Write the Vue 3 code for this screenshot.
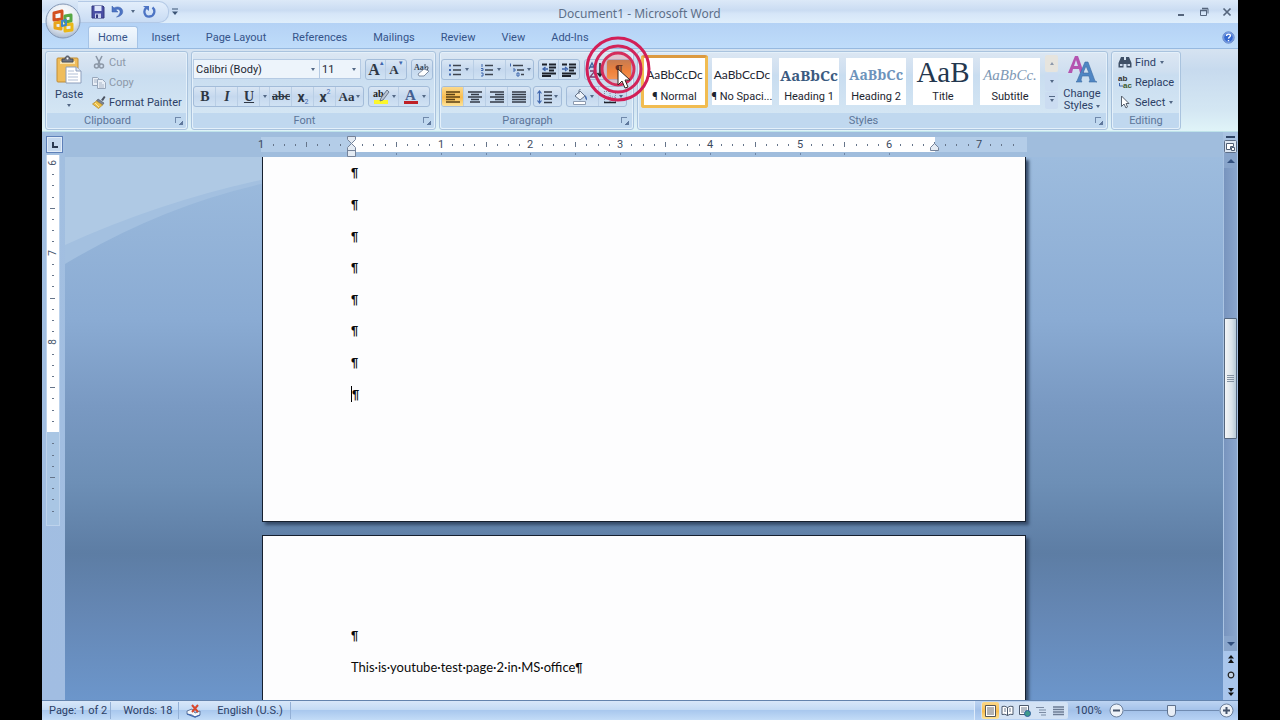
<script setup>
import { ref } from 'vue'

const tabs = ['Home', 'Insert', 'Page Layout', 'References', 'Mailings', 'Review', 'View', 'Add-Ins']
const activeTab = ref('Home')

const styleCards = [
  { name: '¶ Normal', sample: 'AaBbCcDc', kind: 'plain' },
  { name: '¶ No Spaci...', sample: 'AaBbCcDc', kind: 'plain' },
  { name: 'Heading 1', sample: 'AaBbCc', kind: 'h1' },
  { name: 'Heading 2', sample: 'AaBbCc', kind: 'h2' },
  { name: 'Title', sample: 'AaB', kind: 'title' },
  { name: 'Subtitle', sample: 'AaBbCc.', kind: 'subtitle' },
]
const activeStyle = ref(0)

const emptyLines = [1, 2, 3, 4, 5, 6, 7, 8]

const INCH = 89.7
const ORIGIN = 90
const ticks = []
for (let i = -7; i <= 59; i++) {
  if (i % 8 === 0) continue
  ticks.push({ x: Math.round(ORIGIN + (i * INCH) / 8), half: Math.abs(i % 8) === 4 })
}
const inches = [-1, 1, 2, 3, 4, 5, 6, 7].map((n) => ({
  label: Math.abs(n),
  x: Math.round(ORIGIN + n * INCH),
}))
const tabStops = []
for (let i = 1; i <= 12; i++) tabStops.push(Math.round(ORIGIN + (i * INCH) / 2))

const vTicks = []
for (let i = 1; i <= 31; i++) {
  if (i % 8 === 0 || i === 24) continue
  vTicks.push({ y: Math.round(8 + (i * INCH) / 8), half: i % 8 === 4 })
}
const vNumbers = [6, 7, 8].map((n, i) => ({ n, y: Math.round(8 + i * INCH) }))

const scroll = { top: 32, size: 26 }
const zoom = ref(50)
const fontName = ref('Calibri (Body)')
const fontSize = ref('11')
</script>

<template>
  <div class="stage">
    <div class="word">
      <button class="office" aria-label="Office Button">
        <svg width="36" height="36" viewBox="0 0 36 36">
          <defs>
            <radialGradient id="orb" cx="50%" cy="30%" r="75%">
              <stop offset="0" stop-color="#fff" />
              <stop offset=".6" stop-color="#e4eaf2" />
              <stop offset="1" stop-color="#9fb0c8" />
            </radialGradient>
          </defs>
          <circle cx="18" cy="18" r="17" fill="url(#orb)" stroke="#8296b4" />
          <g fill="none" stroke-width="3" stroke-linejoin="round">
            <path d="M9 10l8-2v8l-8 1z" stroke="#d3501f" />
            <path d="M20 13l6-1v6l-6 1z" stroke="#57a845" />
            <path d="M10 20l6-1v7l-6-1z" stroke="#e8a41b" />
            <path d="M20 22l7-1v6l-7 1z" stroke="#eab818" />
            <path d="M17 18l4-1v5l-4 1z" stroke="#3f86c9" stroke-width="2" />
          </g>
        </svg>
      </button>

      <header class="titlebar">
        <div class="quick">
          <button aria-label="Save">
            <svg width="14" height="14" viewBox="0 0 14 14"><path d="M1 1h11l1 1v11H1z" fill="#4a4fa5" stroke="#35397f" /><path d="M3.500 1h7v5h-7z" fill="#dfe6fa" /><path d="M4 8.500h6V13H4z" fill="#c9d1ee" /><path d="M5 9.500h2V13H5z" fill="#35397f" /></svg>
          </button>
          <button class="undo" aria-label="Undo">
            <svg width="13" height="13" viewBox="0 0 13 13"><path d="M1 1v6h6L4.700 4.800C7 3.300 9.500 4.500 9 7.500 8.700 9.500 7 11 5.500 12 10 11.500 12.500 8.500 11.500 5.200 10.500 2 6 1 3 3z" fill="#4d74c4" stroke="#3a5ca9" stroke-width=".5" /></svg>
          </button>
          <i class="caret"></i>
          <button class="redo" aria-label="Repeat">
            <svg width="13" height="13" viewBox="0 0 13 13"><path d="M9.500 2.500C12.500 5 12 11 6.500 11.500S0 5 3.500 2.800" fill="none" stroke="#4d74c4" stroke-width="2.300" /><path d="M0 1h6v5z" fill="#4d74c4" /></svg>
          </button>
        </div>
        <button class="customize" aria-label="Customize Quick Access Toolbar">
          <svg width="8" height="8" viewBox="0 0 8 8"><path d="M1 1h6" stroke="#3b5475" /><path d="M1 3.500h6L4 7z" fill="#3b5475" /></svg>
        </button>
        <h1>Document1 - Microsoft Word</h1>
        <div class="window-buttons">
          <button aria-label="Minimize"><svg width="10" height="10" viewBox="0 0 10 10"><path d="M2 8h6" stroke="#55657c" stroke-width="2" /></svg></button>
          <button aria-label="Restore"><svg width="10" height="10" viewBox="0 0 10 10"><path d="M1.500 3.500h6v5h-6zM3 1.500h6v5" fill="none" stroke="#55657c" /><path d="M1 3.500h7M3 1.500h6" stroke="#55657c" stroke-width="1.500" /></svg></button>
          <button aria-label="Close"><svg width="10" height="10" viewBox="0 0 10 10"><path d="M1.500 1.500l7 7M8.500 1.500l-7 7" stroke="#55657c" stroke-width="1.700" /></svg></button>
        </div>
      </header>

      <nav class="tabs">
        <button v-for="t in tabs" :key="t" :class="{ active: t === activeTab }" @click="activeTab = t">{{ t }}</button>
        <button class="help" aria-label="Help">
          <svg width="13" height="13" viewBox="0 0 13 13"><circle cx="6.500" cy="6.500" r="5.700" fill="#3568cf" stroke="#6f8fca" /><circle cx="6.500" cy="6.500" r="4.800" fill="none" stroke="#bcd3f8" stroke-width=".6" /><path d="M4.500 5c0-2.600 4.200-2.300 4-.2C8.400 6 6.600 6 6.500 7.600M6.500 9v1.300" fill="none" stroke="#fff" stroke-width="1.400" /></svg>
        </button>
      </nav>

      <section class="ribbon">
        <div class="group clipboard">
          <div class="body">
            <button class="paste">
              <svg width="28" height="30" viewBox="0 0 28 30"><rect x="2" y="3" width="21" height="24" rx="1" fill="#f0bd5b" stroke="#c28d35" /><path d="M5 6h15v3H5z" fill="#f8e3ae" /><path d="M7 7V4h3c0-4 5-4 5 0h3v3z" fill="#6f7480" stroke="#474c58" /><circle cx="12.500" cy="3.500" r="1" fill="#fff" /><path d="M11 12h10l5 4v12H11z" fill="#fff" stroke="#8d9ebb" /><path d="M21 12v4h5" fill="#dde6f3" stroke="#8d9ebb" /><path d="M13 16h6M13 19h10M13 22h10M13 25h10" stroke="#b1bfd6" /></svg>
              <span>Paste</span>
              <i class="caret"></i>
            </button>
            <div class="stack">
              <button class="off">
                <svg width="14" height="14" viewBox="0 0 14 14"><path d="M4 1l4 8M10 1L6 9" stroke="#8c97a6" stroke-width="1.600" /><circle cx="4.500" cy="11" r="2" fill="none" stroke="#8c97a6" stroke-width="1.500" /><circle cx="9.500" cy="11" r="2" fill="none" stroke="#8c97a6" stroke-width="1.500" /></svg>
                Cut
              </button>
              <button class="off">
                <svg width="14" height="14" viewBox="0 0 14 14"><path d="M.5 2.500h5l2 2v6h-7z" fill="#e8eef6" stroke="#98a7bb" /><path d="M5.500 4.500h5l3 3v6h-8z" fill="#e8eef6" stroke="#98a7bb" /><path d="M7 8h3M7 10h5M7 12h5M2 5h3M2 7h3" stroke="#a9b6c8" /></svg>
                Copy
              </button>
              <button>
                <svg width="14" height="14" viewBox="0 0 14 14"><path d="M9 5l3-4 1.500 1L11 6z" fill="#4b5260" /><path d="M6 4l6 4-1.500 2-6-4z" fill="#7c8494" stroke="#4b5260" stroke-width=".6" /><path d="M4.500 6l6 4-4 3.500L.5 9z" fill="#ecc04a" stroke="#b28723" stroke-width=".7" /><path d="M3 8l4 4" stroke="#fbe7a4" /></svg>
                Format Painter
              </button>
            </div>
          </div>
          <footer class="with-launcher">Clipboard<i class="launcher"></i></footer>
        </div>

        <div class="group font">
          <div class="body rows">
            <div class="row">
              <div class="combos">
                <label class="combo name"><select v-model="fontName" aria-label="Font"><option>Calibri (Body)</option></select><i class="caret"></i></label>
                <label class="combo size"><select v-model="fontSize" aria-label="Font Size"><option>11</option></select><i class="caret"></i></label>
              </div>
              <div class="set">
                <button class="w20 serif s16" aria-label="Grow Font">A<sup>▴</sup></button>
                <button class="w20 serif s13" aria-label="Shrink Font">A<sup>▾</sup></button>
              </div>
              <div class="set">
                <button class="w20" aria-label="Clear Formatting">
                  <svg width="18" height="16" viewBox="0 0 18 16"><text x="1" y="8" font-size="8" font-family="Liberation Serif" font-weight="700" fill="#333f50">Aa</text><path d="M12 2v6M12 6q3-3 3 0t-3 2" fill="none" stroke="#333f50" stroke-width=".9" /><path d="M5 12l6-5 5 2-5 5-5 0z" fill="#fff" stroke="#7f8da2" /></svg>
                </button>
              </div>
            </div>
            <div class="row">
              <div class="set">
                <button class="w22 serif s14 bold">B</button>
                <button class="w22 serif s14 bold italic">I</button>
                <button class="w22 serif s14 bold under">U</button>
                <button class="w10" aria-label="Underline styles"><i class="caret"></i></button>
                <button class="w22 serif s12 bold strike">abc</button>
                <button class="w22 s14 bold" aria-label="Subscript">x<sub>2</sub></button>
                <button class="w22 s14 bold" aria-label="Superscript">x<sup class="two">2</sup></button>
                <button class="w28 serif s13 bold">Aa<i class="caret"></i></button>
              </div>
              <div class="set">
                <button class="w30" aria-label="Text Highlight Color">
                  <svg width="18" height="18" viewBox="0 0 18 18"><path d="M2 12h14v4H2z" fill="#fbf62c" /><text x="1" y="9" font-size="10" font-family="Liberation Serif" font-weight="700" fill="#222">ab</text><path d="M15 2l2 2-6 8-3 1 1-3z" fill="#b9c4d4" stroke="#56647a" stroke-width=".8" /></svg>
                  <i class="caret"></i>
                </button>
                <button class="w30" aria-label="Font Color">
                  <svg width="18" height="18" viewBox="0 0 18 18"><path d="M2 13h14v3H2z" fill="#bf2026" /><text x="3" y="12" font-size="15" font-family="Liberation Serif" font-weight="700" fill="#456091">A</text></svg>
                  <i class="caret"></i>
                </button>
              </div>
            </div>
          </div>
          <footer class="with-launcher">Font<i class="launcher"></i></footer>
        </div>

        <div class="group paragraph">
          <div class="body rows">
            <div class="row">
              <div class="set">
                <button class="w32" aria-label="Bullets">
                  <svg width="16" height="16" viewBox="0 0 16 16"><path d="M2 3.500h2M2 8h2M2 12.500h2" stroke="#3f66ad" stroke-width="2" /><path d="M6 3.500h8M6 8h8M6 12.500h8" stroke="#3d444f" stroke-width="1.500" /></svg><i class="caret"></i>
                </button>
                <button class="w32" aria-label="Numbering">
                  <svg width="16" height="16" viewBox="0 0 16 16"><path d="M3 2v3M2 6.500h2v2H2M2 11h2v3H2" stroke="#3f66ad" fill="none" /><path d="M6 3.500h8M6 8h8M6 12.500h8" stroke="#3d444f" stroke-width="1.500" /></svg><i class="caret"></i>
                </button>
                <button class="w28" aria-label="Multilevel List">
                  <svg width="16" height="16" viewBox="0 0 16 16"><path d="M1.500 1.500v3M4 7h2v2H4M8 11h2v3H8z" stroke="#3f66ad" fill="none" /><path d="M4 3.500h10M8 8h7M12 12.500h3" stroke="#3d444f" stroke-width="1.500" /></svg><i class="caret"></i>
                </button>
              </div>
              <div class="set">
                <button class="w20" aria-label="Decrease Indent">
                  <svg width="16" height="16" viewBox="0 0 16 16"><path d="M1 2.500h5M8 2.500h7M8 5.500h7M8 8.500h5M1 11.500h14M1 14h9" stroke="#1d222b" stroke-width="1.800" /><path d="M7 7H3M4.500 5L2 7l2.500 2" fill="none" stroke="#3f66ad" stroke-width="1.300" /></svg>
                </button>
                <button class="w20" aria-label="Increase Indent">
                  <svg width="16" height="16" viewBox="0 0 16 16"><path d="M1 2.500h5M8 2.500h7M8 5.500h7M8 8.500h5M1 11.500h14M1 14h9" stroke="#1d222b" stroke-width="1.800" /><path d="M1 7h4M4 5l2.500 2L4 9" fill="none" stroke="#3f66ad" stroke-width="1.300" /></svg>
                </button>
              </div>
              <div class="set">
                <button class="w22" aria-label="Sort">
                  <svg width="16" height="18" viewBox="0 0 16 18"><path d="M1 8l3-6 3 6M2 6h4" fill="none" stroke="#3f5f9c" stroke-width="1.300" /><path d="M2 10h5l-5 6h5" fill="none" stroke="#7d3b6d" stroke-width="1.300" /><path d="M12 2v12M9.500 12l2.500 3 2.500-3" fill="none" stroke="#20252e" stroke-width="1.600" /></svg>
                </button>
                <button class="pilcrow" aria-label="Show/Hide paragraph marks">¶
                  <svg class="click" width="66" height="66" viewBox="0 0 66 66">
                    <circle cx="33" cy="33" r="16" fill="#f06a6a" fill-opacity=".25" stroke="#d52d5c" stroke-width="3" />
                    <circle cx="33" cy="33" r="23" fill="none" stroke="#d2245a" stroke-width="3" />
                    <circle cx="33" cy="33" r="31" fill="none" stroke="#d21f57" stroke-width="3" />
                    <path d="M33 33v16l4-4 3 7 3-1-3-7h5z" fill="#fff" stroke="#33261f" />
                  </svg>
                </button>
              </div>
            </div>
            <div class="row tight">
              <div class="set">
                <button class="w22 chosen" aria-label="Align Left"><svg width="14" height="14" viewBox="0 0 14 14"><path d="M0 2h14M0 4.500h9M0 7h14M0 9.500h9M0 12h14" stroke="#5b4214" stroke-width="1.400" /></svg></button>
                <button class="w22" aria-label="Center"><svg width="14" height="14" viewBox="0 0 14 14"><path d="M0 2h14M3 4.500h8M0 7h14M3 9.500h8M2 12h10" stroke="#333a46" stroke-width="1.400" /></svg></button>
                <button class="w22" aria-label="Align Right"><svg width="14" height="14" viewBox="0 0 14 14"><path d="M0 2h14M5 4.500h9M0 7h14M5 9.500h9M0 12h14" stroke="#333a46" stroke-width="1.400" /></svg></button>
                <button class="w22" aria-label="Justify"><svg width="14" height="14" viewBox="0 0 14 14"><path d="M0 2h14M0 4.500h14M0 7h14M0 9.500h14M0 12h14" stroke="#333a46" stroke-width="1.400" /></svg></button>
              </div>
              <div class="set">
                <button class="w28" aria-label="Line Spacing"><svg width="15" height="16" viewBox="0 0 15 16"><path d="M2.500 2v12M.5 4.500l2-2.500 2 2.500M.5 11.500l2 2.500 2-2.500" fill="none" stroke="#3f66ad" stroke-width="1.200" /><path d="M7 3h8M7 6.500h8M7 10h8M7 13.500h8" stroke="#333a46" stroke-width="1.300" /></svg><i class="caret"></i></button>
              </div>
              <div class="set">
                <button class="w32" aria-label="Shading"><svg width="16" height="16" viewBox="0 0 16 16"><path d="M3 7l5-5 5 5-5 4z" fill="#eef3fa" stroke="#66748a" /><path d="M7 5V1.500q0-1 1.500-1" fill="none" stroke="#66748a" /><path d="M13 6q3 3 1.500 5.500Q12.500 9 13 6z" fill="#3f66ad" /><path d="M1.500 12.500h12v3h-12z" fill="#fff" stroke="#8d9bb0" /></svg><i class="caret"></i></button>
                <button class="w28" aria-label="Borders"><svg width="14" height="14" viewBox="0 0 14 14"><path d="M1.500 1v11M12.500 1v11M7 1v11M1 1.500h12M1 7h12" stroke="#7f8ca1" stroke-dasharray="1 1" /><path d="M1 12.500h12" stroke="#1d222b" stroke-width="1.500" /></svg><i class="caret"></i></button>
              </div>
            </div>
          </div>
          <footer class="with-launcher">Paragraph<i class="launcher"></i></footer>
        </div>

        <div class="group styles">
          <div class="body">
            <div class="gallery">
              <button v-for="(s, i) in styleCards" :key="s.name" class="card" :class="[s.kind, { picked: i === activeStyle }]" @click="activeStyle = i">
                <span class="sample">{{ s.sample }}</span>
                <span class="label">{{ s.name }}</span>
              </button>
              <div class="gallery-nav">
                <button class="dim" aria-label="Previous styles"><i class="caret up"></i></button>
                <button aria-label="Next styles"><i class="caret"></i></button>
                <button aria-label="More styles"><i class="caret bar"></i></button>
              </div>
            </div>
            <button class="change">
              <svg width="30" height="30" viewBox="0 0 30 30"><path d="M1 18L8 1h3l6 17h-4l-1-4H6l-1 4zM7 11h4L9 5z" fill="#b455b0" fill-rule="evenodd" /><path d="M9 27l1-1L18 7h3l7 19 2 1h-8l1-2-1-4h-7l-1 4 1 2zM16 18h6l-3-7z" fill="#4f86c4" stroke="#3c6ba3" stroke-width=".6" fill-rule="evenodd" /></svg>
              <span>Change</span>
              <span>Styles <i class="caret"></i></span>
            </button>
          </div>
          <footer class="with-launcher">Styles<i class="launcher"></i></footer>
        </div>

        <div class="group editing">
          <div class="body">
            <div class="stack">
              <button>
                <svg width="14" height="14" viewBox="0 0 14 14"><path d="M3 2h3v3h2V2h3l2.500 6v4.500h-5V9h-3v3.500h-5V8z" fill="#3e4f66" /><path d="M2 9h2.500v2H2zM9.500 9H12v2H9.500z" fill="#c8d6e8" /></svg>
                Find <i class="caret"></i>
              </button>
              <button>
                <svg width="14" height="14" viewBox="0 0 14 14"><text x="0" y="6" font-size="8" font-family="Liberation Sans" font-weight="700" fill="#333">ab</text><text x="5" y="13" font-size="8" font-family="Liberation Sans" font-weight="700" fill="#3c5a2c">ac</text><path d="M1.500 8v3H5" fill="none" stroke="#3f66ad" /></svg>
                Replace
              </button>
              <button>
                <svg width="14" height="14" viewBox="0 0 14 14"><path d="M3.500 1v10.500L6 9l2 4 1.500-1-1.500-3.500h3z" fill="#fff" stroke="#56606e" /></svg>
                Select <i class="caret"></i>
              </button>
            </div>
          </div>
          <footer>Editing</footer>
        </div>
      </section>

      <main class="work">
        <aside class="left-ruler">
          <button class="tab-kind" aria-label="Tab selector"><svg width="12" height="12" viewBox="0 0 12 12"><path d="M4 3v5h5" fill="none" stroke="#2c3a52" stroke-width="2" /></svg></button>
          <svg class="vruler" width="14" height="371" viewBox="0 0 14 371">
            <rect width="14" height="371" fill="#bdd3ec" />
            <rect x="1" width="12" height="277" fill="#fff" />
            <rect x="1" y="277" width="12" height="93" fill="#a9c6e4" />
            <path v-for="t in vTicks" :key="t.y" :d="`M${t.half ? 4 : 6} ${t.y}.5h${t.half ? 5 : 2}`" stroke="#66758a" />
            <text v-for="v in vNumbers" :key="v.n" x="0" y="0" :transform="`translate(10 ${v.y}) rotate(-90)`" text-anchor="middle" font-size="10" fill="#44546a">{{ v.n }}</text>
          </svg>
        </aside>

        <div class="center">
          <div class="hruler">
            <svg width="766" height="25" viewBox="0 0 766 25">
              <rect y="5" width="766" height="15" fill="#b4cde8" />
              <rect x="90" y="5" width="584" height="15" fill="#fff" />
              <path v-for="t in ticks" :key="t.x" :d="`M${t.x}.5 ${t.half ? 10 : 12}v${t.half ? 5 : 2}`" stroke="#66758a" />
              <path v-for="x in tabStops" :key="'s' + x" :d="`M${x}.5 21v2`" stroke="#6f87a8" />
              <text v-for="n in inches" :key="n.x" :x="n.x" y="16" text-anchor="middle" font-size="11" fill="#3c4a5e">{{ n.label }}</text>
              <path d="M86.500 4.500h8v3l-4 4 4 4v9h-8v-9l4-4-4-4zM86.500 18.500h8" fill="#e4ebf3" stroke="#75839a" />
              <path d="M669.500 18.500v-3l4-4 4 4v3z" fill="#e4ebf3" stroke="#75839a" />
            </svg>
          </div>
          <div class="canvas">
            <svg class="swoosh" width="420" height="110" viewBox="0 0 420 110">
              <path d="M0 107Q95 50 196 27T420 0H0z" fill="#a3c0e0" />
              <path d="M0 88Q95 45 196 23T420 0H0z" fill="#afc9e4" />
            </svg>
            <article class="page first">
              <p v-for="n in emptyLines" :key="n"><i v-if="n === emptyLines.length" class="insertion"></i><b>¶</b></p>
            </article>
            <article class="page second">
              <p><b>¶</b></p>
              <p>This·is·youtube·test·page·2·in·MS·office<b>¶</b></p>
            </article>
          </div>
        </div>

        <aside class="scroller">
          <div class="split"></div>
          <button class="ruler-toggle" aria-label="View Ruler"><svg width="13" height="13" viewBox="0 0 13 13"><rect x=".5" y=".5" width="12" height="12" rx="1" fill="#dce6f2" stroke="#5c6d86" /><path d="M2.500 3.500h7v3h-3v3h-4z" fill="#fff" stroke="#4f5e74" /><path d="M7.500 7.500h3v3h-3z" fill="#fff" stroke="#4f5e74" /></svg></button>
          <button class="arrow" aria-label="Scroll up"><i class="caret up"></i></button>
          <div class="track"><div class="thumb" :style="{ top: scroll.top + '%', height: scroll.size + '%' }"><i></i></div></div>
          <button class="arrow" aria-label="Scroll down"><i class="caret"></i></button>
          <div class="browse">
            <button aria-label="Previous Page"><svg width="8" height="8" viewBox="0 0 8 8"><path d="M4 0l3 3.500H1zM4 4l3 4H1z" fill="#111" /></svg></button>
            <button aria-label="Select Browse Object"><svg width="8" height="8" viewBox="0 0 8 8"><circle cx="4" cy="4" r="2.800" fill="#c3d2e4" stroke="#222" stroke-width="1.200" /></svg></button>
            <button aria-label="Next Page"><svg width="8" height="8" viewBox="0 0 8 8"><path d="M4 4l3-4H1zM4 8l3-3.500H1z" fill="#111" /></svg></button>
          </div>
        </aside>
      </main>

      <footer class="status">
        <button class="pages">Page: 1 of 2</button>
        <button class="words">Words: 18</button>
        <button class="proof" aria-label="Proofing errors">
          <svg width="16" height="14" viewBox="0 0 16 14"><path d="M1 7l5-2 3 4 5-2v4l-5 2-3-2-5-1z" fill="#f5f7fb" stroke="#61789f" /><path d="M1 10l5 2 3 1 5-2" fill="none" stroke="#3f66ad" stroke-width="1.300" /><path d="M6 1l6 7M12 1L6 8" stroke="#d8472c" stroke-width="2" /></svg>
        </button>
        <button class="lang">English (U.S.)</button>
        <div class="right">
          <div class="views">
            <button class="chosen" aria-label="Print Layout"><svg width="13" height="12" viewBox="0 0 13 12"><path d="M1.500.5h10v11h-10z" fill="#fff" stroke="#555" /><path d="M3 3h7M3 5h7M3 7h7M3 9h7" stroke="#666" /></svg></button>
            <button aria-label="Full Screen Reading"><svg width="13" height="12" viewBox="0 0 13 12"><path d="M1 1.500q3-1 5.500 1 2.500-2 5.500-1v8q-3-1-5.500 1-2.500-2-5.500-1zM6.500 2.500v8" fill="#fff" stroke="#4c5a6e" /><path d="M3 4h2M3 6h2M8 4h2M8 6h2" stroke="#6c7a8e" /></svg></button>
            <button aria-label="Web Layout"><svg width="13" height="12" viewBox="0 0 13 12"><path d="M1.500.5h9v9h-9z" fill="#fff" stroke="#4c5a6e" /><path d="M3 3h6M3 5h6M3 7h3" stroke="#6c7a8e" /><circle cx="9.500" cy="8.500" r="3" fill="#3e9a8a" stroke="#2d5f9e" /></svg></button>
            <button aria-label="Outline"><svg width="13" height="12" viewBox="0 0 13 12"><path d="M1 2.500h8M4 5h7M4 7.500h7M6 10h5" stroke="#7b8ba3" stroke-width="1.200" /></svg></button>
            <button aria-label="Draft"><svg width="13" height="12" viewBox="0 0 13 12"><path d="M1 2h11M1 4.500h11M1 7h11M1 9.500h11" stroke="#6c7c94" stroke-width="1.300" /></svg></button>
          </div>
          <button class="percent">100%</button>
          <button class="round" aria-label="Zoom Out"><svg width="15" height="15" viewBox="0 0 15 15"><circle cx="7.500" cy="7.500" r="6.500" fill="#edf2f8" stroke="#6c7f9b" /><path d="M4 7.500h7" stroke="#46556c" stroke-width="2" /></svg></button>
          <input v-model="zoom" type="range" min="0" max="100" aria-label="Zoom" />
          <button class="round" aria-label="Zoom In"><svg width="15" height="15" viewBox="0 0 15 15"><circle cx="7.500" cy="7.500" r="6.500" fill="#edf2f8" stroke="#6c7f9b" /><path d="M4 7.500h7M7.500 4v7" stroke="#46556c" stroke-width="2" /></svg></button>
        </div>
      </footer>
    </div>
  </div>
</template>

<style>
body { background: #000; }
</style>

<style scoped>
.stage { display: flex; height: 100vh; padding: 0 42px; box-sizing: border-box; background: #000; font-family: Roboto, "Liberation Sans", sans-serif; font-size: 11px; color: #2c4066; }
.word { position: relative; display: flex; flex-direction: column; flex: 1; min-width: 0; overflow: hidden; background: #bfdbfa; }
button { display: flex; align-items: center; justify-content: center; margin: 0; padding: 0; border: 0; background: none; font: inherit; color: inherit; white-space: nowrap; }
svg { display: block; flex: none; }
.caret { display: block; flex: none; width: 0; height: 0; border: 2px solid transparent; border-top: 3px solid #536885; border-bottom: 0; }
.caret.up { border-top: 0; border-bottom: 3px solid #8d99ab; }

.office { position: absolute; left: 3px; top: 3px; z-index: 2; }

.titlebar { display: flex; align-items: center; height: 23px; padding-right: 6px; background: linear-gradient(#dce9f8, #cadcf2 45%, #d6e6f8 60%, #dfeefb); }
.quick { display: flex; align-items: center; height: 20px; margin-left: 36px; padding: 0 12px 0 13px; border: 1px solid #b3c9e6; border-left: 0; border-radius: 0 10px 10px 0; background: linear-gradient(#e3eefb, #c9dcf4); }
.undo { margin: 0 7px 0 6px; }
.redo { margin-left: 8px; }
.customize { margin-left: 2px; }
h1 { flex: 1; margin: 4px 0 0; padding-right: 76px; font-family: "Noto Sans", sans-serif; font-size: 12px; line-height: 16px; font-weight: 400; text-align: center; color: #5d6f88; }
.window-buttons { display: flex; gap: 13px; }

.tabs { display: flex; align-items: flex-end; height: 25px; padding-left: 46px; background: linear-gradient(#b4d2f5, #bfdcfa); }
.tabs button { height: 22px; margin-right: 2px; padding: 0 11px; border: 1px solid transparent; border-bottom: 0; color: #35548a; }
.tabs .active { border-color: #a5c3e6; border-radius: 3px 3px 0 0; padding: 0 9px; background: linear-gradient(#f2f8fe, #dce9f6); }
.tabs .help { margin: 0 2px 0 auto; padding: 0; }

.ribbon { display: flex; gap: 3px; padding: 2px 3px 1px; border-top: 1px solid #97b9e0; border-bottom: 1px solid #bfe3ea; background: linear-gradient(#d6e3f1, #c7daee 25%, #d4e7f3 75%, #e0f4f8); }
.group { display: flex; flex-direction: column; height: 79px; box-sizing: border-box; border: 1px solid #a9c3de; border-radius: 3px; box-shadow: inset 0 0 0 1px #e4f0fa; background: linear-gradient(#dce7f3, #cfdff0 25%, #c9ddf0 30%, #d8e9f5); }
.group .body { display: flex; flex: 1; }
.group > footer { position: relative; height: 15px; line-height: 16px; margin: 0 1px 1px; border-radius: 0 0 2px 2px; background: #c0d8ef; text-align: center; color: #5c7599; }
.group > .with-launcher { padding-right: 18px; }
.launcher { position: absolute; right: 5px; top: 4px; width: 5px; height: 5px; border: solid #7089ab; border-width: 1px 0 0 1px; }
.launcher::after { content: ""; position: absolute; right: -2px; bottom: -2px; width: 4px; height: 4px; background: linear-gradient(135deg, transparent 50%, #5f789c 50%); }
.clipboard { width: 143px; }
.font { width: 245px; }
.paragraph { width: 195px; }
.editing { width: 70px; }

.paste { flex-direction: column; justify-content: flex-start; gap: 3px; width: 46px; padding-top: 3px; }
.paste span { line-height: 13px; }
.stack { display: flex; flex-direction: column; gap: 6px; padding-top: 3px; }
.stack button { justify-content: flex-start; gap: 3px; height: 14px; }
.off { color: #8d99a9; }

.rows { flex-direction: column; gap: 6px; padding: 7px 1px 0; }
.row { display: flex; gap: 4px; }
.set { display: flex; box-sizing: border-box; height: 21px; border: 1px solid #a3bcd9; border-radius: 3px; background: linear-gradient(#d9e6f4, #c5d8ee 50%, #d0e2f3); }
.set button { color: #2e3744; gap: 2px; }
.set button + button { box-shadow: -1px 0 0 #b9cee5; }
.combos { display: flex; }
.combo { display: flex; align-items: center; box-sizing: border-box; height: 20px; border: 1px solid #b5cae3; background: #edf4fb; }
.combo + .combo { margin-left: -1px; }
.combo .caret { margin: 0 4px 0 -8px; pointer-events: none; }
.combo.name { width: 127px; }
.combo.size { width: 42px; }
select { width: 100%; height: 18px; padding: 0 0 0 2px; border: 0; appearance: none; background: none; font: inherit; color: #1e2733; outline: 0; }
.w10 { width: 10px; } .w20 { width: 20px; } .w22 { width: 22px; } .w28 { width: 27px; } .w30 { width: 30px; } .w32 { width: 32px; }
.serif { font-family: "Liberation Serif", serif; }
.s12 { font-size: 12px; } .s13 { font-size: 13px; font-weight: 700; } .s14 { font-size: 14px; } .s16 { font-size: 16px; font-weight: 700; }
.bold { font-weight: 700; } .italic { font-style: italic; } .under { text-decoration: underline; } .strike { text-decoration: line-through; }
.set sup, .set sub { font-size: 7px; font-weight: 400; line-height: 7px; color: #3f66ad; }
.set sup { align-self: flex-start; } .set sub { align-self: flex-end; }
.set .two { padding-top: 2px; }
.set button:has(sup), .set button:has(sub) { gap: 0; }
.chosen { border-radius: 2px; background: linear-gradient(#fbd98c, #f8bd4f 55%, #fde39a); }
.paragraph .pilcrow { position: relative; width: 24px; border-radius: 2px; background: linear-gradient(#b9814a, #f08a2c 60%, #f4a04a); font-family: "Liberation Sans", sans-serif; font-size: 14px; font-weight: 700; color: #3b200a; }
.click { position: absolute; left: -22px; top: -24px; z-index: 3; pointer-events: none; }
.paragraph .tight { gap: 2px; }
.paragraph .tight .set:last-child { margin-left: 2px; }

.styles .body { padding: 3px 3px 0; }
.gallery { display: flex; height: 54px; gap: 3px; margin-right: 2px; padding-left: 1px; }
.card { flex-direction: column; justify-content: flex-start; box-sizing: border-box; width: 64px; height: 51px; margin-top: 1px; border: 2px solid transparent; background: #fff; background-clip: padding-box; color: #1d2530; }
.card.picked { width: 67px; height: 53px; margin: 0 -1px; border: 3px solid #f1bc51; border-top-color: #dc9a41; border-radius: 3px; background-clip: border-box; }
.sample { width: 100%; height: 32px; line-height: 34px; text-align: center; }
.label { line-height: 13px; }
.plain .sample { font-family: Lato, sans-serif; font-size: 12px; }
.h1 .sample { font-family: "Noto Serif", "Liberation Serif", serif; font-size: 15px; font-weight: 700; color: #3b5a80; }
.h2 .sample { font-family: "Noto Serif", "Liberation Serif", serif; font-size: 14px; font-weight: 700; color: #6d93bb; }
.title .sample { font-family: "Liberation Serif", serif; font-size: 29px; line-height: 28px; color: #24374f; }
.subtitle .sample { font-family: "Liberation Serif", serif; font-size: 15px; font-style: italic; color: #7d98b5; }
.gallery-nav { display: flex; flex-direction: column; gap: 1px; width: 13px; }
.gallery-nav button { flex: 1; border-radius: 2px; background: #cbdcf1; }
.gallery-nav .dim { background: #e6e4de; }
.caret.bar { position: relative; }
.caret.bar::before { content: ""; position: absolute; left: -3px; top: -6px; width: 6px; height: 1px; background: #536885; }
.change { flex-direction: column; justify-content: flex-start; width: 44px; }
.change svg { margin-bottom: 3px; }
.change span { display: flex; align-items: center; gap: 3px; line-height: 12px; }
.editing .stack { padding-left: 6px; }
.editing .caret { margin-left: 1px; }

.work { display: flex; flex: 1; min-height: 0; }
.left-ruler { display: flex; flex-direction: column; width: 23px; background: linear-gradient(#a2bfe0, #a1bde2); }
.tab-kind { width: 17px; height: 17px; margin: 4px 0 2px 4px; border: 1px solid #5e80b8; background: #c6d9ef; box-shadow: inset 0 0 0 1px #e1ecf8; }
.vruler { margin-left: 4px; }
.center { display: flex; flex-direction: column; flex: 1; min-width: 0; }
.hruler { display: flex; justify-content: center; height: 25px; background: #a0bddd; }
.hruler svg { overflow: visible; }
.canvas { position: relative; flex: 1; min-height: 0; overflow: hidden; background: linear-gradient(#9dbcde, #8aabd3 30%, #7999c2 46%, #6d8fb6 60%, #5d7da4 73%, #6587b4 84%, #6c96cb); }
.swoosh { position: absolute; left: 0; top: 0; }
.page { position: relative; width: 764px; max-width: 100%; box-sizing: border-box; margin: 0 auto 13px; padding: 0 88px; border: 1px solid #16202f; background: #fdfdfe; box-shadow: 3px 3px 3px #364c6b; font-family: Lato, sans-serif; font-size: 13px; color: #0b0b0b; }
.page.first { border-top: 0; padding-bottom: 111px; display: grid; grid-template-rows: repeat(8, 1fr); height: 365px; }
.page.second { padding-top: 83px; height: 989px; }
.page p { display: flex; align-items: center; margin: 0; height: 32px; }
.page.first p { height: auto; }
.page b { font-family: "Liberation Sans", sans-serif; font-weight: 700; }
.insertion { width: 1px; height: 16px; background: #000; }

.scroller { display: flex; flex-direction: column; align-items: center; width: 15px; background: #a9c3e2; }
.split { width: 9px; height: 2px; margin: 4px 0 2px; background: #2f4566; }
.arrow { width: 13px; height: 15px; background: #88a4ca; }
.arrow .caret { border-width: 4px 4px 0; border-top-color: #33507e; }
.arrow .caret.up { border-width: 0 4px 4px; border-bottom-color: #33507e; }
.track { position: relative; flex: 1; width: 13px; background: linear-gradient(90deg, #7894be, #8aa6cc); }
.thumb { position: absolute; left: 0; right: 0; display: flex; align-items: center; justify-content: center; box-sizing: border-box; border: 1px solid #56687f; border-radius: 1px; background: linear-gradient(90deg, #f3f5f7, #dbe4ea 60%, #b8cbd8); }
.thumb i { width: 7px; height: 7px; background: repeating-linear-gradient(#8694a4 0 1px, transparent 1px 2px); }
.browse { display: flex; flex-direction: column; justify-content: space-around; width: 15px; height: 49px; background: #a9c6ec; }

.status { display: flex; align-items: center; height: 20px; border-top: 1px solid #6484ae; box-sizing: border-box; background: linear-gradient(#d8e7f9, #c4dbf5 45%, #a9c8ee 50%, #c3dcf7); color: #2c4066; }
.status > button { height: 17px; border-right: 1px solid #93b0d6; }
.pages { padding: 0 3px 0 7px; }
.words { padding: 0 6px 0 12px; }
.status > .proof { border: 0; padding-left: 7px; }
.lang { padding: 0 7px 0 15px; }
.right { display: flex; align-items: center; height: 19px; margin-left: auto; padding: 0 4px 0 6px; border-left: 1px solid #e0ecfa; background: linear-gradient(#bdd4f2, #a3c1e9 50%, #b7d2f4); }
.views { display: flex; padding: 0 1px; border-radius: 2px; background: #d3e2f4; }
.views button { width: 17px; height: 17px; }
.percent { width: 41px; }
.round { width: 15px; }
input[type="range"] { width: 95px; height: 16px; margin: 0; appearance: none; background: linear-gradient(#708bb1, #708bb1) center / 100% 1px no-repeat; }
input[type="range"]::-webkit-slider-thumb { appearance: none; width: 9px; height: 12px; border: 1px solid #5f728e; border-radius: 1px 1px 5px 5px; background: #e8eef6; }
</style>
